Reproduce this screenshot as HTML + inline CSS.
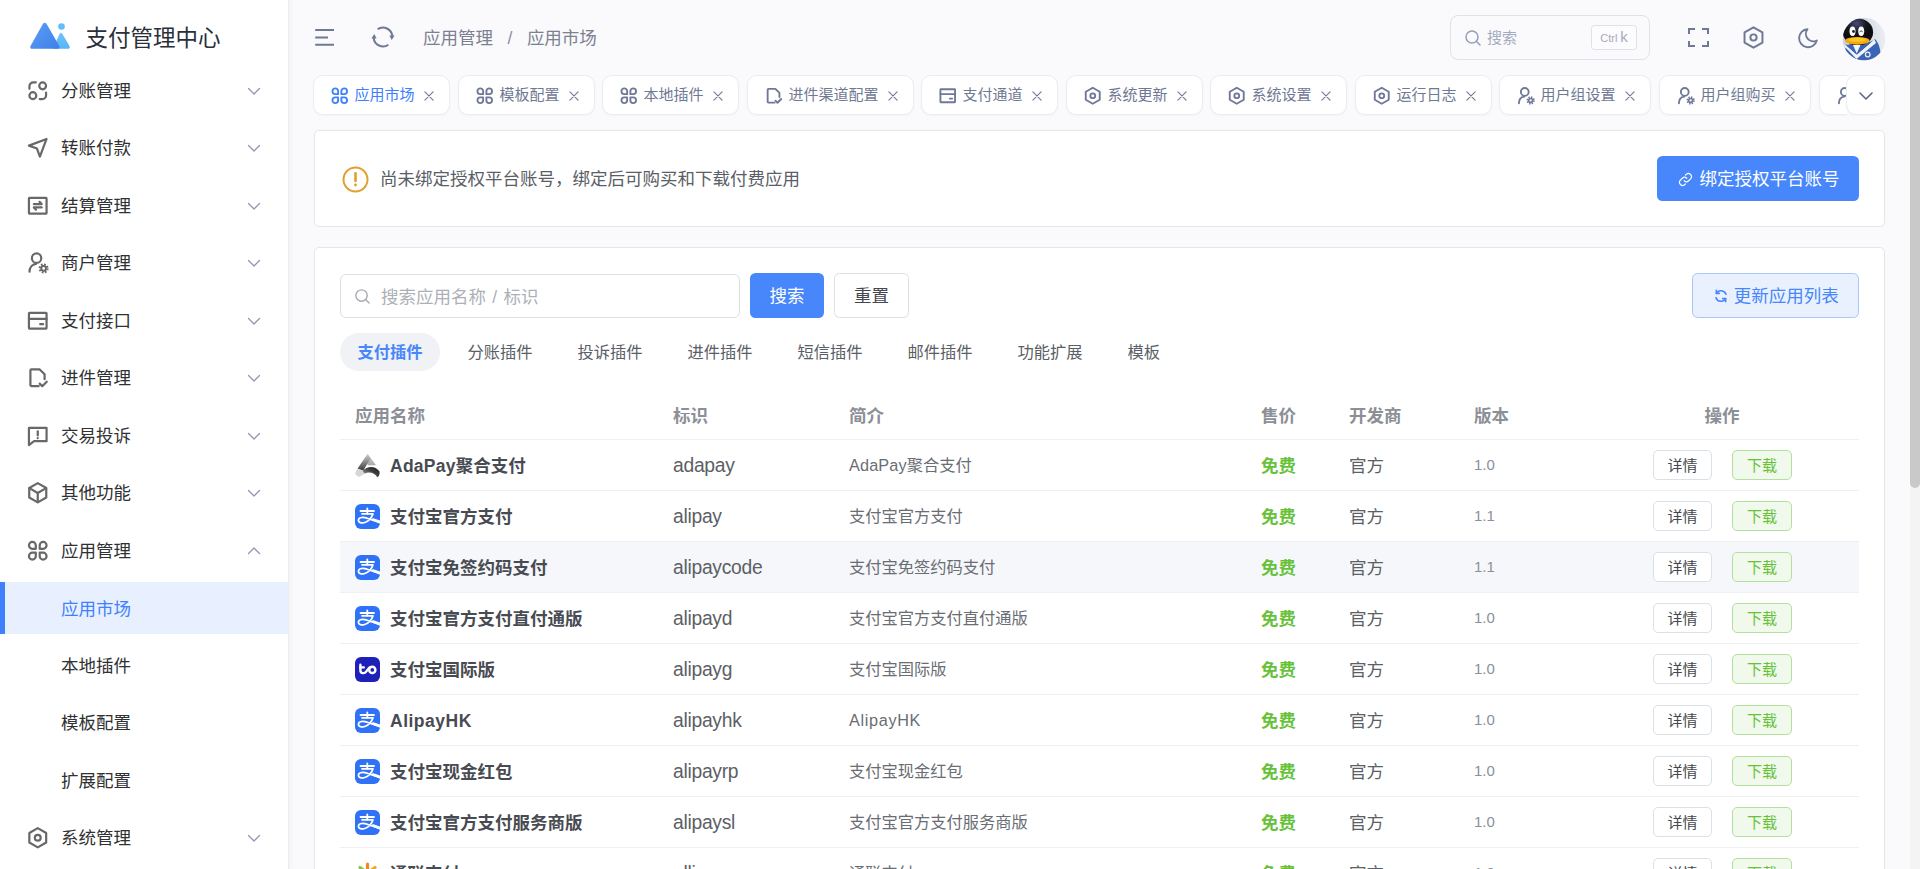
<!DOCTYPE html>
<html lang="zh-CN"><head><meta charset="utf-8"><title>支付管理中心</title>
<style>
*{box-sizing:border-box;margin:0;padding:0}
html,body{width:1920px;height:869px;overflow:hidden;background:#fafafc;font-family:"Liberation Sans","Noto Sans CJK SC",sans-serif;color:#333}
body{position:relative}
.abs{position:absolute}
.ic{display:block}
#side{position:absolute;left:0;top:0;width:288px;height:869px;background:#fff;box-shadow:1px 0 0 #ebebee,2px 0 6px rgba(40,40,60,.05)}
#logo{position:absolute;left:29px;top:20.300px}
#title{position:absolute;left:85.500px;top:22px;font-size:22.5px;line-height:34px;color:#2b2f3a;white-space:nowrap}
.mi{position:absolute;left:0;width:288px;height:52.5px}
.mi .ic{position:absolute;left:26.300px;top:15.200px}
.mi .tx{position:absolute;left:61px;top:1.200px;line-height:52.5px;font-size:17.5px;color:#303133;white-space:nowrap}
.mi .ch{position:absolute;left:247px;top:20px}
.mi.act{background:#e8f0ff;border-left:5px solid #4080ff;height:52px;margin-top:.25px}
.mi.act .tx{left:56px;color:#4080ff}
#scroll{position:absolute;left:1910px;top:0;width:10px;height:869px;background:#f4f4f5}
#scroll i{position:absolute;left:0;top:0;width:10px;height:488px;background:#c9c9c9;border-radius:0 0 5px 5px}

#hd{position:absolute;left:289px;top:0;width:1621px;height:75px}
#bc{position:absolute;left:423px;top:23px;font-size:17.5px;line-height:30px;color:#7b8190;white-space:nowrap}
#bc span{margin:0 14.500px 0 14.500px;color:#8a90a0}
#sbox{position:absolute;left:1450px;top:15px;width:200px;height:45px;border:1px solid #dfe2ea;border-radius:8px;background:#fafafc}
#sbox .t{position:absolute;left:36px;top:0;line-height:43px;font-size:15px;color:#a3abc3}
#sbox .k{position:absolute;left:140.300px;top:9px;width:45.500px;height:24.500px;border:1px solid #dfe1e8;border-radius:3.500px;background:#fcfcfe;color:#a6a9bd;font-size:15px;line-height:21px;text-align:center;white-space:nowrap}
#sbox .k small{font-size:11px;margin-right:3px}
#tabs{position:absolute;left:313px;top:75px;width:1534px;height:42px;overflow:hidden;white-space:nowrap}
.tab{position:absolute;top:0;height:40px;background:#fff;border:1px solid #ebecf0;border-radius:10px;box-shadow:0 1px 2px rgba(120,130,170,.06);font-size:15px;line-height:37.500px;color:#6f7994}
.tab .ic{position:absolute;left:15.800px;top:9.800px}
.tab .tt{position:absolute;left:40.500px;top:0}
.tab .x{position:absolute;right:15px;top:14.500px}
.tab.on{color:#4080ff}
#tdd{position:absolute;left:1846px;top:75px;width:38.500px;height:40px;background:#fff;border:1px solid #ebecf0;border-radius:10px;box-shadow:0 1px 2px rgba(120,130,170,.06)}

.card{position:absolute;left:314px;width:1571px;background:#fff;border:1px solid #e6e6e9;border-radius:5px}
#alert{top:130px;height:97px}
#alert .msg{position:absolute;left:65px;top:33px;font-size:17.500px;line-height:30px;color:#5a5e66;white-space:nowrap}
.btn{position:absolute;display:block;text-align:center;white-space:nowrap;border-radius:5.500px}
#bind{left:1657px;top:156px;width:202px;height:45px;background:#4786fb;color:#fff;font-size:17.500px;line-height:46px;padding-left:23px}
#main{top:247px;height:700px}
#sin{position:absolute;left:340px;top:273.500px;width:399.500px;height:44px;border:1px solid #dcdfe6;border-radius:6px;background:#fff}
#sin span{position:absolute;left:40px;top:0.500px;line-height:44px;font-size:17.500px;color:#adb0b7;white-space:nowrap;word-spacing:1.500px}
#bsearch{left:750px;top:273px;width:74px;height:45px;background:#4786fb;color:#fff;font-size:17.500px;line-height:46px}
#breset{left:834px;top:273px;width:75px;height:45px;background:#fff;border:1px solid #dcdfe6;color:#44474d;font-size:17.500px;line-height:44px}
#bupd{left:1692px;top:273px;width:166.500px;height:45px;background:#e9f1fe;border:1px solid #a9c7fb;color:#4786fb;font-size:17.500px;line-height:44px;padding-left:22px}
.seg{position:absolute;top:333px;height:38px;line-height:38.500px;font-size:16.250px;color:#5a5e66;white-space:nowrap;text-align:center;width:100px;border-radius:19px}
.seg.on{background:#f0f2f5;color:#4786fb;font-weight:bold}
.th{position:absolute;top:401px;line-height:30px;font-size:17.500px;font-weight:bold;color:#8c8f96;white-space:nowrap}
.hl{position:absolute;left:340px;width:1519px;height:1px;background:#eeeff3}
.row{position:absolute;left:340px;width:1519px;height:51px}
.row.hov{background:#f5f7fa}
.row>*{position:absolute;white-space:nowrap}
.row .aic{left:15px;top:13.500px;width:25px;height:25px}
.row .nm{margin-top:1.700px;left:50px;top:0;line-height:50px;font-size:17.500px;font-weight:bold;color:#484b52}
.row .idt{margin-top:1.700px;left:333px;top:0;line-height:49px;font-size:19.300px;color:#5c5f66;letter-spacing:-.28px}
.row .ds{margin-top:1.700px;left:509px;top:0;line-height:49px;font-size:16.250px;color:#6a6d74}
.row .pr{margin-top:1.700px;left:921px;top:0;line-height:50px;font-size:17.500px;font-weight:bold;color:#67c23a}
.row .dv{margin-top:1.700px;left:1009px;top:0;line-height:50px;font-size:17.500px;color:#5c5f66}
.row .vr{margin-top:1.700px;left:1134px;top:0;line-height:48px;font-size:15px;color:#8c9098}
.row i{font-style:normal}.row .nm i{letter-spacing:.5px}.row .ds i{letter-spacing:.65px}
.row .b1{left:1313px;top:10.500px;width:59px;height:30px;border:1px solid #dcdfe6;border-radius:5px;background:#fff;color:#44474d;font-size:15px;line-height:30px;text-align:center}
.row .b2{left:1392px;top:10.500px;width:60px;height:30px;border:1px solid #b3e19d;border-radius:5px;background:#f0f9eb;color:#67c23a;font-size:15px;line-height:30px;text-align:center}

</style></head><body>
<div id="side"><svg id="logo" width="42" height="30.800" viewBox="0 0 42 32" preserveAspectRatio="none"><defs><linearGradient id="lg1" x1="0" y1="0" x2="1" y2="1"><stop offset="0" stop-color="#5aa0f5"/><stop offset="1" stop-color="#3f7fe8"/></linearGradient><linearGradient id="lg2" x1="0" y1="0" x2="0" y2="1"><stop offset="0" stop-color="#6cc3fb"/><stop offset="1" stop-color="#56b4f7"/></linearGradient></defs><path d="M30.500 14.500c.7-1.200 2.300-1.200 3 0l7 12.500c.8 1.400-.1 3-1.700 3H24z" fill="url(#lg2)"/><circle cx="32.500" cy="6.800" r="3.300" fill="#62bdfa"/><path d="M14 3.800c.8-1.400 2.700-1.400 3.500 0L30.300 27c.8 1.400-.2 3-1.800 3H3.300c-1.600 0-2.600-1.600-1.800-3z" fill="url(#lg1)"/></svg><div id="title">支付管理中心</div><div class="mi" style="top:63.75px"><svg class="ic" width="23.5" height="23.5" viewBox="0 0 24 24" fill="none" stroke="#686868" stroke-width="2.25" stroke-linecap="round" stroke-linejoin="round" ><path d="M10 3.5H7.5a4 4 0 0 0-4 4V10"/><circle cx="17" cy="7" r="3.5"/><circle cx="7" cy="17" r="3.5"/><path d="M14 20.5h2.5a4 4 0 0 0 4-4V14"/></svg><span class="tx">分账管理</span><svg class="ch" width="14" height="14" viewBox="0 0 14 14" fill="none" stroke="#8f97b3" stroke-width="1.3" stroke-linecap="round" stroke-linejoin="round"><path d="M1.500 4.500 7 10l5.500-5.500"/></svg></div><div class="mi" style="top:121.25px"><svg class="ic" width="23.5" height="23.5" viewBox="0 0 24 24" fill="none" stroke="#686868" stroke-width="2.25" stroke-linecap="round" stroke-linejoin="round" ><path d="M21 3 3 9.8l8.2 3 3 8.2z"/></svg><span class="tx">转账付款</span><svg class="ch" width="14" height="14" viewBox="0 0 14 14" fill="none" stroke="#8f97b3" stroke-width="1.3" stroke-linecap="round" stroke-linejoin="round"><path d="M1.500 4.500 7 10l5.500-5.500"/></svg></div><div class="mi" style="top:178.75px"><svg class="ic" width="23.5" height="23.5" viewBox="0 0 24 24" fill="none" stroke="#686868" stroke-width="2.25" stroke-linecap="round" stroke-linejoin="round" ><rect x="3" y="4" width="18" height="16" rx="0.5"/><path d="M8 10.3h8l-2.2-2.3"/><path d="M16 13.7H8l2.2 2.3"/></svg><span class="tx">结算管理</span><svg class="ch" width="14" height="14" viewBox="0 0 14 14" fill="none" stroke="#8f97b3" stroke-width="1.3" stroke-linecap="round" stroke-linejoin="round"><path d="M1.500 4.500 7 10l5.500-5.500"/></svg></div><div class="mi" style="top:236.25px"><svg class="ic" width="23.5" height="23.5" viewBox="0 0 24 24" fill="none" stroke="#686868" stroke-width="2.25" stroke-linecap="round" stroke-linejoin="round" ><circle cx="10.800" cy="7.300" r="4.800"/><path d="M3.600 21.200c0-4.300 2.600-7.600 6.600-8.100"/><circle cx="18" cy="17.800" r="2.400" stroke-width="2"/><circle cx="18" cy="17.800" r="4" stroke-width="2.200" stroke-dasharray="1.700 1.440" stroke-linecap="butt"/></svg><span class="tx">商户管理</span><svg class="ch" width="14" height="14" viewBox="0 0 14 14" fill="none" stroke="#8f97b3" stroke-width="1.3" stroke-linecap="round" stroke-linejoin="round"><path d="M1.500 4.500 7 10l5.500-5.500"/></svg></div><div class="mi" style="top:293.75px"><svg class="ic" width="23.5" height="23.5" viewBox="0 0 24 24" fill="none" stroke="#686868" stroke-width="2.25" stroke-linecap="round" stroke-linejoin="round" ><rect x="3" y="4" width="18" height="16" rx="0.5"/><path d="M3 10h18"/><path d="M14.5 15.5h3"/></svg><span class="tx">支付接口</span><svg class="ch" width="14" height="14" viewBox="0 0 14 14" fill="none" stroke="#8f97b3" stroke-width="1.3" stroke-linecap="round" stroke-linejoin="round"><path d="M1.500 4.500 7 10l5.500-5.500"/></svg></div><div class="mi" style="top:351.25px"><svg class="ic" width="23.5" height="23.5" viewBox="0 0 24 24" fill="none" stroke="#686868" stroke-width="2.25" stroke-linecap="round" stroke-linejoin="round" ><path d="M13 20.5H5.5a1 1 0 0 1-1-1v-15a1 1 0 0 1 1-1H14l5 5v5"/><path d="M14 18l2.6 2.6 4.6-4.6"/></svg><span class="tx">进件管理</span><svg class="ch" width="14" height="14" viewBox="0 0 14 14" fill="none" stroke="#8f97b3" stroke-width="1.3" stroke-linecap="round" stroke-linejoin="round"><path d="M1.500 4.500 7 10l5.500-5.500"/></svg></div><div class="mi" style="top:408.75px"><svg class="ic" width="23.5" height="23.5" viewBox="0 0 24 24" fill="none" stroke="#686868" stroke-width="2.25" stroke-linecap="round" stroke-linejoin="round" ><path d="M3 4h18v13.5H8.2L3 21.5z"/><path d="M12 7.5v4.2"/><path d="M12 14.3v.2"/></svg><span class="tx">交易投诉</span><svg class="ch" width="14" height="14" viewBox="0 0 14 14" fill="none" stroke="#8f97b3" stroke-width="1.3" stroke-linecap="round" stroke-linejoin="round"><path d="M1.500 4.500 7 10l5.500-5.500"/></svg></div><div class="mi" style="top:466.25px"><svg class="ic" width="23.5" height="23.5" viewBox="0 0 24 24" fill="none" stroke="#686868" stroke-width="2.25" stroke-linecap="round" stroke-linejoin="round" ><path d="M12 2.2l8.7 5v9.6l-8.7 5-8.7-5V7.2z"/><path d="M3.5 7.3 12 12.2l8.5-4.9"/><path d="M12 12.2v9.4"/></svg><span class="tx">其他功能</span><svg class="ch" width="14" height="14" viewBox="0 0 14 14" fill="none" stroke="#8f97b3" stroke-width="1.3" stroke-linecap="round" stroke-linejoin="round"><path d="M1.500 4.500 7 10l5.500-5.500"/></svg></div><div class="mi" style="top:523.75px"><svg class="ic" width="23.5" height="23.5" viewBox="0 0 24 24" fill="none" stroke="#686868" stroke-width="2.25" stroke-linecap="round" stroke-linejoin="round" ><path d="M10 10V6.5a3.5 3.5 0 1 0-3.500 3.500z"/><path d="M14 10V6.5a3.5 3.5 0 1 1 3.500 3.500z"/><path d="M10 14v3.500a3.5 3.5 0 1 1-3.500-3.500z"/><path d="M14 14v3.500a3.5 3.500 0 1 0 3.500-3.500z"/></svg><span class="tx">应用管理</span><svg class="ch" width="14" height="14" viewBox="0 0 14 14" fill="none" stroke="#8f97b3" stroke-width="1.3" stroke-linecap="round" stroke-linejoin="round"><path d="M1.500 9.500 7 4l5.500 5.500"/></svg></div><div class="mi act" style="top:581.25px"><span class="tx">应用市场</span></div><div class="mi" style="top:638.75px"><span class="tx">本地插件</span></div><div class="mi" style="top:696.25px"><span class="tx">模板配置</span></div><div class="mi" style="top:753.75px"><span class="tx">扩展配置</span></div><div class="mi" style="top:811.25px"><svg class="ic" width="23.5" height="23.5" viewBox="0 0 24 24" fill="none" stroke="#686868" stroke-width="2.25" stroke-linecap="round" stroke-linejoin="round" ><path d="M12 2.2l8.6 4.9v9.8L12 21.800l-8.600-4.900V7.100z"/><circle cx="12" cy="12" r="3"/></svg><span class="tx">系统管理</span><svg class="ch" width="14" height="14" viewBox="0 0 14 14" fill="none" stroke="#8f97b3" stroke-width="1.3" stroke-linecap="round" stroke-linejoin="round"><path d="M1.500 4.500 7 10l5.500-5.500"/></svg></div></div>
<svg class="abs" style="left:313px;top:27px" width="23" height="21" viewBox="0 0 23 21" fill="none" stroke="#6f7997" stroke-width="1.900" stroke-linecap="butt"><path d="M2.200 3h18.800M2.200 10.500h12.800M2.200 17.800h18.800"/></svg><svg class="abs" style="left:370.600px;top:25.400px" width="24" height="24" viewBox="0 0 24 24" fill="none" stroke="#6f7997" stroke-width="2" stroke-linecap="butt"><path d="M6.600 4.300A9.400 9.400 0 0 1 21.360 11.180"/><path d="M17.400 19.700A9.400 9.400 0 0 1 2.640 12.820"/><path d="M18.400 10.600h5.200l-2.900 4.400z" fill="#6f7997" stroke="none"/><path d="M.4 13.400h5.200L3.300 9z" fill="#6f7997" stroke="none"/></svg><div id="bc">应用管理<span>/</span>应用市场</div><div id="sbox"><svg class="abs" style="left:13px;top:12.500px" width="18" height="18" viewBox="0 0 18 18" fill="none" stroke="#979ebd" stroke-width="1.500" stroke-linecap="round"><circle cx="8" cy="8" r="6"/><path d="M12.500 12.500 16 16"/></svg><span class="t">搜索</span><span class="k"><small>Ctrl</small>k</span></div><svg class="abs" style="left:1687px;top:27px" width="23" height="21" viewBox="0 0 23 21" fill="none" stroke="#6f7997" stroke-width="2" stroke-linecap="butt" stroke-linejoin="miter"><path d="M2 7V2h6M15 2h6v5M21 14v5h-6M8 19H2v-5"/></svg><svg class="abs" style="left:1741px;top:25px" width="25" height="25" viewBox="0 0 24 24" fill="none" stroke="#6f7997" stroke-width="1.900" stroke-linejoin="round"><path d="M12 2.200l8.600 4.900v9.800L12 21.800l-8.600-4.900V7.100z"/><circle cx="12" cy="12" r="3"/></svg><svg class="abs" style="left:1796px;top:25.500px" width="24" height="24" viewBox="0 0 24 24" fill="none" stroke="#6f7997" stroke-width="1.900" stroke-linejoin="round" stroke-linecap="round"><path d="M11.500 3.200a7.500 7.500 0 0 0 9.300 11.300A9 9 0 1 1 11.500 3.200z"/></svg><svg class="abs" style="left:1842px;top:16.500px" width="44" height="44" viewBox="0 0 44 44"><defs><clipPath id="avc"><circle cx="22" cy="22" r="21.300"/></clipPath><linearGradient id="avg" x1="0" y1="0" x2="1" y2="0"><stop offset="0" stop-color="#c9d2e4"/><stop offset=".7" stop-color="#dde1ea"/><stop offset="1" stop-color="#eceef3"/></linearGradient><radialGradient id="avh" cx=".45" cy=".18" r=".55"><stop offset="0" stop-color="#4a4a78"/><stop offset=".6" stop-color="#16161f"/><stop offset="1" stop-color="#0c0c12"/></radialGradient></defs><g clip-path="url(#avc)"><rect width="44" height="44" fill="url(#avg)"/><path d="M1 44c-1-12 5-19 15-19 8 0 14 1 17-3 4 4 6.500 12 5.500 22z" fill="#3a64b4"/><ellipse cx="16" cy="15.200" rx="15.100" ry="13.600" fill="url(#avh)"/><path d="M2 26.500l12.500 11L32.500 22.500l1.500 3.500-19.500 16L3 30z" fill="#f2f4f8"/><path d="M2 26.500c4 3 20 3 27-1l-14 12z" fill="#3a64b4"/><path d="M11 28l3.700 8.500L18.500 28z" fill="#f4f6fa"/><ellipse cx="10.500" cy="14.200" rx="3" ry="4.800" fill="#fff"/><ellipse cx="19.200" cy="14.200" rx="3" ry="4.800" fill="#fff"/><circle cx="11.500" cy="14.500" r="1.400" fill="#222"/><path d="M17.800 15.200c.5-1.800 2.300-1.800 2.800 0" stroke="#333" stroke-width=".9" fill="none"/><ellipse cx="15.300" cy="23.800" rx="12.300" ry="3.900" fill="#f5a810"/><ellipse cx="15.300" cy="22.800" rx="9" ry="2" fill="#fbc822"/><circle cx="25.700" cy="37.500" r="2.300" fill="none" stroke="#e8eef8" stroke-width="1.300"/></g></svg>
<div id="tabs"><div class="tab on" style="left:0.00px;width:137.00px"><svg class="ic" width="19.5" height="19.5" viewBox="0 0 24 24" fill="none" stroke="#4080ff" stroke-width="2.3" stroke-linecap="round" stroke-linejoin="round" ><path d="M10 10V6.5a3.5 3.5 0 1 0-3.500 3.500z"/><path d="M14 10V6.5a3.5 3.5 0 1 1 3.500 3.500z"/><path d="M10 14v3.500a3.5 3.5 0 1 1-3.500-3.500z"/><path d="M14 14v3.500a3.5 3.500 0 1 0 3.500-3.500z"/></svg><span class="tt">应用市场</span><svg class="x" width="10" height="10" viewBox="0 0 11 11" stroke="#6f7994" stroke-width="1.200" stroke-linecap="round"><path d="M1 1l9 9M10 1l-9 9"/></svg></div><div class="tab" style="left:145.00px;width:137.00px"><svg class="ic" width="19.5" height="19.5" viewBox="0 0 24 24" fill="none" stroke="#6f7997" stroke-width="2.3" stroke-linecap="round" stroke-linejoin="round" ><path d="M10 10V6.5a3.5 3.5 0 1 0-3.500 3.500z"/><path d="M14 10V6.5a3.5 3.5 0 1 1 3.500 3.500z"/><path d="M10 14v3.500a3.5 3.5 0 1 1-3.500-3.500z"/><path d="M14 14v3.500a3.5 3.500 0 1 0 3.500-3.500z"/></svg><span class="tt">模板配置</span><svg class="x" width="10" height="10" viewBox="0 0 11 11" stroke="#6f7994" stroke-width="1.200" stroke-linecap="round"><path d="M1 1l9 9M10 1l-9 9"/></svg></div><div class="tab" style="left:289.00px;width:137.00px"><svg class="ic" width="19.5" height="19.5" viewBox="0 0 24 24" fill="none" stroke="#6f7997" stroke-width="2.3" stroke-linecap="round" stroke-linejoin="round" ><path d="M10 10V6.5a3.5 3.5 0 1 0-3.500 3.500z"/><path d="M14 10V6.5a3.5 3.5 0 1 1 3.500 3.500z"/><path d="M10 14v3.500a3.5 3.5 0 1 1-3.500-3.500z"/><path d="M14 14v3.500a3.5 3.500 0 1 0 3.500-3.500z"/></svg><span class="tt">本地插件</span><svg class="x" width="10" height="10" viewBox="0 0 11 11" stroke="#6f7994" stroke-width="1.200" stroke-linecap="round"><path d="M1 1l9 9M10 1l-9 9"/></svg></div><div class="tab" style="left:434.00px;width:167.00px"><svg class="ic" width="19.5" height="19.5" viewBox="0 0 24 24" fill="none" stroke="#6f7997" stroke-width="2.3" stroke-linecap="round" stroke-linejoin="round" ><path d="M13 20.5H5.5a1 1 0 0 1-1-1v-15a1 1 0 0 1 1-1H14l5 5v5"/><path d="M14 18l2.6 2.6 4.6-4.6"/></svg><span class="tt">进件渠道配置</span><svg class="x" width="10" height="10" viewBox="0 0 11 11" stroke="#6f7994" stroke-width="1.200" stroke-linecap="round"><path d="M1 1l9 9M10 1l-9 9"/></svg></div><div class="tab" style="left:608.00px;width:137.00px"><svg class="ic" width="19.5" height="19.5" viewBox="0 0 24 24" fill="none" stroke="#6f7997" stroke-width="2.3" stroke-linecap="round" stroke-linejoin="round" ><rect x="3" y="4" width="18" height="16" rx="0.5"/><path d="M3 10h18"/><path d="M14.5 15.5h3"/></svg><span class="tt">支付通道</span><svg class="x" width="10" height="10" viewBox="0 0 11 11" stroke="#6f7994" stroke-width="1.200" stroke-linecap="round"><path d="M1 1l9 9M10 1l-9 9"/></svg></div><div class="tab" style="left:753.00px;width:137.00px"><svg class="ic" width="19.5" height="19.5" viewBox="0 0 24 24" fill="none" stroke="#6f7997" stroke-width="2.3" stroke-linecap="round" stroke-linejoin="round" ><path d="M12 2.2l8.6 4.9v9.8L12 21.800l-8.600-4.900V7.100z"/><circle cx="12" cy="12" r="3"/></svg><span class="tt">系统更新</span><svg class="x" width="10" height="10" viewBox="0 0 11 11" stroke="#6f7994" stroke-width="1.200" stroke-linecap="round"><path d="M1 1l9 9M10 1l-9 9"/></svg></div><div class="tab" style="left:897.00px;width:137.00px"><svg class="ic" width="19.5" height="19.5" viewBox="0 0 24 24" fill="none" stroke="#6f7997" stroke-width="2.3" stroke-linecap="round" stroke-linejoin="round" ><path d="M12 2.2l8.6 4.9v9.8L12 21.800l-8.600-4.900V7.100z"/><circle cx="12" cy="12" r="3"/></svg><span class="tt">系统设置</span><svg class="x" width="10" height="10" viewBox="0 0 11 11" stroke="#6f7994" stroke-width="1.200" stroke-linecap="round"><path d="M1 1l9 9M10 1l-9 9"/></svg></div><div class="tab" style="left:1042.00px;width:137.00px"><svg class="ic" width="19.5" height="19.5" viewBox="0 0 24 24" fill="none" stroke="#6f7997" stroke-width="2.3" stroke-linecap="round" stroke-linejoin="round" ><path d="M12 2.2l8.6 4.9v9.8L12 21.800l-8.600-4.900V7.100z"/><circle cx="12" cy="12" r="3"/></svg><span class="tt">运行日志</span><svg class="x" width="10" height="10" viewBox="0 0 11 11" stroke="#6f7994" stroke-width="1.200" stroke-linecap="round"><path d="M1 1l9 9M10 1l-9 9"/></svg></div><div class="tab" style="left:1186.00px;width:152.00px"><svg class="ic" width="19.5" height="19.5" viewBox="0 0 24 24" fill="none" stroke="#6f7997" stroke-width="2.3" stroke-linecap="round" stroke-linejoin="round" ><circle cx="10.800" cy="7.300" r="4.800"/><path d="M3.600 21.200c0-4.300 2.600-7.600 6.600-8.100"/><circle cx="18" cy="17.800" r="2.400" stroke-width="2"/><circle cx="18" cy="17.800" r="4" stroke-width="2.200" stroke-dasharray="1.700 1.440" stroke-linecap="butt"/></svg><span class="tt">用户组设置</span><svg class="x" width="10" height="10" viewBox="0 0 11 11" stroke="#6f7994" stroke-width="1.200" stroke-linecap="round"><path d="M1 1l9 9M10 1l-9 9"/></svg></div><div class="tab" style="left:1346.00px;width:152.00px"><svg class="ic" width="19.5" height="19.5" viewBox="0 0 24 24" fill="none" stroke="#6f7997" stroke-width="2.3" stroke-linecap="round" stroke-linejoin="round" ><circle cx="10.800" cy="7.300" r="4.800"/><path d="M3.600 21.200c0-4.300 2.600-7.600 6.600-8.100"/><circle cx="18" cy="17.800" r="2.400" stroke-width="2"/><circle cx="18" cy="17.800" r="4" stroke-width="2.200" stroke-dasharray="1.700 1.440" stroke-linecap="butt"/></svg><span class="tt">用户组购买</span><svg class="x" width="10" height="10" viewBox="0 0 11 11" stroke="#6f7994" stroke-width="1.200" stroke-linecap="round"><path d="M1 1l9 9M10 1l-9 9"/></svg></div><div class="tab" style="left:1506.00px;width:141.00px"><svg class="ic" width="19.5" height="19.5" viewBox="0 0 24 24" fill="none" stroke="#6f7997" stroke-width="2.3" stroke-linecap="round" stroke-linejoin="round" ><circle cx="10.800" cy="7.300" r="4.800"/><path d="M3.600 21.200c0-4.300 2.600-7.600 6.600-8.100"/><circle cx="18" cy="17.800" r="2.400" stroke-width="2"/><circle cx="18" cy="17.800" r="4" stroke-width="2.200" stroke-dasharray="1.700 1.440" stroke-linecap="butt"/></svg><span class="tt">用户组</span><svg class="x" width="10" height="10" viewBox="0 0 11 11" stroke="#6f7994" stroke-width="1.200" stroke-linecap="round"><path d="M1 1l9 9M10 1l-9 9"/></svg></div></div><div id="tdd"><svg class="abs" style="left:10.500px;top:12.500px" width="16" height="14" viewBox="0 0 16 14" fill="none" stroke="#5d6785" stroke-width="1.600" stroke-linecap="round" stroke-linejoin="round"><path d="M2 4l6 6 6-6"/></svg></div>
<div class="card" id="alert"><svg class="abs" style="left:25.600px;top:33.600px" width="29" height="29" viewBox="0 0 29 29" fill="none" stroke="#dfa031" stroke-width="2" stroke-linecap="round"><circle cx="14.500" cy="14.500" r="12"/><path d="M14.500 8.200v7.800" stroke-width="2.600"/><path d="M14.500 19.800v.2" stroke-width="2.800"/></svg><div class="msg">尚未绑定授权平台账号，绑定后可购买和下载付费应用</div></div><a class="btn" id="bind"><svg class="abs" style="left:21px;top:15.500px" width="15" height="15" viewBox="0 0 24 24" fill="none" stroke="#fff" stroke-width="1.900" stroke-linecap="round" stroke-linejoin="round"><path d="M10 14a5 5 0 0 0 7 0l3.500-3.500a5 5 0 0 0-7-7L12 5"/><path d="M14 10a5 5 0 0 0-7 0l-3.500 3.500a5 5 0 0 0 7 7L12 19"/></svg>绑定授权平台账号</a><div class="card" id="main"></div><div id="sin"><svg class="abs" style="left:12.500px;top:13.500px" width="17" height="17" viewBox="0 0 18 18" fill="none" stroke="#a8abb2" stroke-width="1.500" stroke-linecap="round"><circle cx="8" cy="8" r="6"/><path d="M12.500 12.500 16 16"/></svg><span>搜索应用名称 / 标识</span></div><a class="btn" id="bsearch">搜索</a><a class="btn" id="breset">重置</a><a class="btn" id="bupd"><svg class="abs" style="left:20px;top:13.500px" width="16" height="16" viewBox="0 0 24 24" fill="none" stroke="#4786fb" stroke-width="2.400" stroke-linecap="round" stroke-linejoin="round"><path d="M4.500 14.500A8 8 0 0 0 19 16"/><path d="M19.500 9.500A8 8 0 0 0 5 8"/><path d="M5 3.500V8h4.500"/><path d="M19 20.500V16h-4.500"/></svg>更新应用列表</a><div class="seg on" style="left:340px;width:100px">支付插件</div><div class="seg" style="left:450px;width:100px">分账插件</div><div class="seg" style="left:560px;width:100px">投诉插件</div><div class="seg" style="left:670px;width:100px">进件插件</div><div class="seg" style="left:780px;width:100px">短信插件</div><div class="seg" style="left:890px;width:100px">邮件插件</div><div class="seg" style="left:1000px;width:100px">功能扩展</div><div class="seg" style="left:1110px;width:67.5px">模板</div><div class="th" style="left:355px">应用名称</div><div class="th" style="left:673px">标识</div><div class="th" style="left:849px">简介</div><div class="th" style="left:1261px">售价</div><div class="th" style="left:1349px">开发商</div><div class="th" style="left:1474px">版本</div><div class="th" style="left:1704.5px">操作</div><div class="hl" style="top:439px"></div><div class="row" style="top:439.5px"><svg class="aic" viewBox="0 0 25 25"><defs><linearGradient id="ad1" x1="0" y1="0" x2="0" y2="1"><stop offset="0" stop-color="#d2d2d2"/><stop offset="1" stop-color="#383838"/></linearGradient><linearGradient id="ad2" x1="0" y1="0" x2="0" y2="1"><stop offset="0" stop-color="#d0d0d0"/><stop offset="1" stop-color="#a9a9a9"/></linearGradient><linearGradient id="ad3" x1="0" y1="1" x2="1" y2="0"><stop offset="0" stop-color="#a8a8a8"/><stop offset=".6" stop-color="#3a3a3a"/><stop offset="1" stop-color="#1e1e1e"/></linearGradient></defs><path d="M12.600.8 21 12.200H13L12 10.500 14.600 6.800z" fill="url(#ad2)"/><path d="M12.600.800 15.500 5.500 8.200 17.800 2.600 15.600z" fill="url(#ad1)"/><path d="M2.600 15.600 8.200 17.800 12.500 20C9 21 6.500 22.500 4.700 23.800 2 23.500 0 21.500.2 19.800z" fill="#d6d6d6"/><path d="M7.800 18C12 13 20 12 24.500 18.500 25 21 24 23.500 22.300 24.300 20 20 15 18.500 9.400 20.300z" fill="url(#ad3)"/></svg><span class="nm"><i style="letter-spacing:.25px">AdaPay</i>聚合支付</span><span class="idt">adapay</span><span class="ds"><i style="letter-spacing:.15px">AdaPay</i>聚合支付</span><span class="pr">免费</span><span class="dv">官方</span><span class="vr">1.0</span><span class="b1">详情</span><span class="b2">下载</span></div><div class="hl" style="top:490px"></div><div class="row" style="top:490.5px"><svg class="aic" viewBox="0 0 25 25"><defs><clipPath id="alc"><rect width="25" height="25" rx="6"/></clipPath></defs><rect width="25" height="25" rx="6" fill="#2f72f7"/><g clip-path="url(#alc)" fill="none" stroke="#fff" stroke-width="1.800" stroke-linecap="round" stroke-linejoin="round"><path d="M5.500 7h13.500"/><path d="M12.300 4.500v5"/><path d="M7 9.800h11c-1 3.200-3.800 7.200-8.300 8.700-3.300 1.100-6.300.1-6.300-2.200 0-2.400 3-3.500 6.500-2.700 4 1 9 3.200 16.100 5.400"/><path d="M18 15.500l8 2.800" stroke-width="2.600"/></g></svg><span class="nm">支付宝官方支付</span><span class="idt">alipay</span><span class="ds">支付宝官方支付</span><span class="pr">免费</span><span class="dv">官方</span><span class="vr">1.1</span><span class="b1">详情</span><span class="b2">下载</span></div><div class="hl" style="top:541px"></div><div class="row hov" style="top:541.5px"><svg class="aic" viewBox="0 0 25 25"><defs><clipPath id="alc"><rect width="25" height="25" rx="6"/></clipPath></defs><rect width="25" height="25" rx="6" fill="#2f72f7"/><g clip-path="url(#alc)" fill="none" stroke="#fff" stroke-width="1.800" stroke-linecap="round" stroke-linejoin="round"><path d="M5.500 7h13.500"/><path d="M12.300 4.500v5"/><path d="M7 9.800h11c-1 3.200-3.800 7.200-8.300 8.700-3.300 1.100-6.300.1-6.300-2.200 0-2.400 3-3.500 6.500-2.700 4 1 9 3.200 16.100 5.400"/><path d="M18 15.500l8 2.800" stroke-width="2.600"/></g></svg><span class="nm">支付宝免签约码支付</span><span class="idt">alipaycode</span><span class="ds">支付宝免签约码支付</span><span class="pr">免费</span><span class="dv">官方</span><span class="vr">1.1</span><span class="b1">详情</span><span class="b2">下载</span></div><div class="hl" style="top:592px"></div><div class="row" style="top:592.5px"><svg class="aic" viewBox="0 0 25 25"><defs><clipPath id="alc"><rect width="25" height="25" rx="6"/></clipPath></defs><rect width="25" height="25" rx="6" fill="#2f72f7"/><g clip-path="url(#alc)" fill="none" stroke="#fff" stroke-width="1.800" stroke-linecap="round" stroke-linejoin="round"><path d="M5.500 7h13.500"/><path d="M12.300 4.500v5"/><path d="M7 9.800h11c-1 3.200-3.800 7.200-8.300 8.700-3.300 1.100-6.300.1-6.300-2.200 0-2.400 3-3.500 6.500-2.700 4 1 9 3.200 16.100 5.400"/><path d="M18 15.500l8 2.800" stroke-width="2.600"/></g></svg><span class="nm">支付宝官方支付直付通版</span><span class="idt">alipayd</span><span class="ds">支付宝官方支付直付通版</span><span class="pr">免费</span><span class="dv">官方</span><span class="vr">1.0</span><span class="b1">详情</span><span class="b2">下载</span></div><div class="hl" style="top:643px"></div><div class="row" style="top:643.5px"><svg class="aic" viewBox="0 0 25 25"><rect width="25" height="25" rx="6" fill="#1d21b9"/><g fill="none" stroke="#fff" stroke-width="2.400" stroke-linecap="round" stroke-linejoin="round"><path d="M5.400 7.800v5.400c0 3.600 4.200 3.800 6 1.200 .9-1.300 1.800-2.700 3-3.800"/><path d="M5.400 10.400h3.400"/><circle cx="17.300" cy="12.900" r="3.100"/></g></svg><span class="nm">支付宝国际版</span><span class="idt">alipayg</span><span class="ds">支付宝国际版</span><span class="pr">免费</span><span class="dv">官方</span><span class="vr">1.0</span><span class="b1">详情</span><span class="b2">下载</span></div><div class="hl" style="top:694px"></div><div class="row" style="top:694.5px"><svg class="aic" viewBox="0 0 25 25"><defs><clipPath id="alc"><rect width="25" height="25" rx="6"/></clipPath></defs><rect width="25" height="25" rx="6" fill="#2f72f7"/><g clip-path="url(#alc)" fill="none" stroke="#fff" stroke-width="1.800" stroke-linecap="round" stroke-linejoin="round"><path d="M5.500 7h13.500"/><path d="M12.300 4.500v5"/><path d="M7 9.800h11c-1 3.200-3.800 7.200-8.300 8.700-3.300 1.100-6.300.1-6.300-2.200 0-2.400 3-3.500 6.500-2.700 4 1 9 3.200 16.100 5.400"/><path d="M18 15.500l8 2.800" stroke-width="2.600"/></g></svg><span class="nm"><i>AlipayHK</i></span><span class="idt">alipayhk</span><span class="ds"><i>AlipayHK</i></span><span class="pr">免费</span><span class="dv">官方</span><span class="vr">1.0</span><span class="b1">详情</span><span class="b2">下载</span></div><div class="hl" style="top:745px"></div><div class="row" style="top:745.5px"><svg class="aic" viewBox="0 0 25 25"><defs><clipPath id="alc"><rect width="25" height="25" rx="6"/></clipPath></defs><rect width="25" height="25" rx="6" fill="#2f72f7"/><g clip-path="url(#alc)" fill="none" stroke="#fff" stroke-width="1.800" stroke-linecap="round" stroke-linejoin="round"><path d="M5.500 7h13.500"/><path d="M12.300 4.500v5"/><path d="M7 9.800h11c-1 3.200-3.800 7.200-8.300 8.700-3.300 1.100-6.300.1-6.300-2.200 0-2.400 3-3.500 6.500-2.700 4 1 9 3.200 16.100 5.400"/><path d="M18 15.500l8 2.800" stroke-width="2.600"/></g></svg><span class="nm">支付宝现金红包</span><span class="idt">alipayrp</span><span class="ds">支付宝现金红包</span><span class="pr">免费</span><span class="dv">官方</span><span class="vr">1.0</span><span class="b1">详情</span><span class="b2">下载</span></div><div class="hl" style="top:796px"></div><div class="row" style="top:796.5px"><svg class="aic" viewBox="0 0 25 25"><defs><clipPath id="alc"><rect width="25" height="25" rx="6"/></clipPath></defs><rect width="25" height="25" rx="6" fill="#2f72f7"/><g clip-path="url(#alc)" fill="none" stroke="#fff" stroke-width="1.800" stroke-linecap="round" stroke-linejoin="round"><path d="M5.500 7h13.500"/><path d="M12.300 4.500v5"/><path d="M7 9.800h11c-1 3.200-3.800 7.200-8.300 8.700-3.300 1.100-6.300.1-6.300-2.200 0-2.400 3-3.500 6.500-2.700 4 1 9 3.200 16.100 5.400"/><path d="M18 15.500l8 2.800" stroke-width="2.600"/></g></svg><span class="nm">支付宝官方支付服务商版</span><span class="idt">alipaysl</span><span class="ds">支付宝官方支付服务商版</span><span class="pr">免费</span><span class="dv">官方</span><span class="vr">1.0</span><span class="b1">详情</span><span class="b2">下载</span></div><div class="hl" style="top:847px"></div><div class="row" style="top:847.5px"><svg class="aic" viewBox="0 0 25 25"><g stroke-linecap="round" stroke-width="3.200" fill="none"><path d="M12.500 12V3" stroke="#f08a1c"/><path d="M12.500 12 5 6.500" stroke="#8cc63f"/><path d="M12.500 12l7.500-5.500" stroke="#f5a623"/><path d="M12.500 12 3.500 14" stroke="#6cb33f"/><path d="M12.500 12l9 2" stroke="#f08a1c"/></g></svg><span class="nm">通联支付</span><span class="idt">allinpay</span><span class="ds">通联支付</span><span class="pr">免费</span><span class="dv">官方</span><span class="vr">1.0</span><span class="b1">详情</span><span class="b2">下载</span></div><div class="hl" style="top:898px"></div>
<div id="scroll"><i></i></div>
</body></html>
